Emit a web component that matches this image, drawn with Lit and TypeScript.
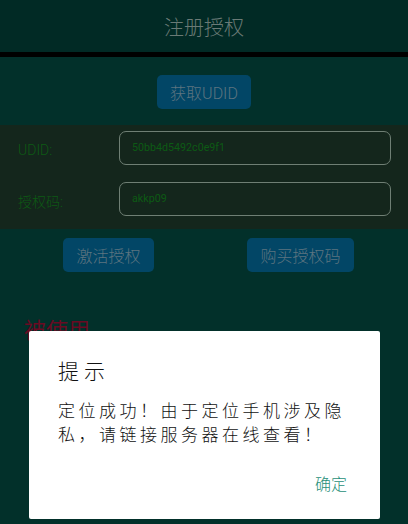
import { LitElement, html, css } from "lit";
import { customElement } from "lit/decorators.js";

@customElement("app-root")
export class AppRoot extends LitElement {
  static styles = css`
    :host {
      display: block;
      position: relative;
      width: 408px;
      height: 524px;
      overflow: hidden;
      background: #02302a;
      font-family: Roboto, "Noto Sans CJK SC", sans-serif;
    }
    .header {
      height: 52px;
      box-sizing: border-box;
      background: #012a25;
      display: flex;
      align-items: center;
      justify-content: center;
      color: #6a7a76;
      font-size: 20px;
      font-weight: 300;
    }
    .rule {
      height: 5px;
      background: #000;
    }
    .top {
      height: 68px;
      display: flex;
      align-items: flex-start;
      justify-content: center;
      padding-top: 18px;
      box-sizing: border-box;
    }
    .btn {
      height: 34px;
      box-sizing: border-box;
      border-radius: 5px;
      background: #024666;
      color: #5d7480;
      font-size: 16px;
      font-weight: 300;
      display: flex;
      align-items: center;
      justify-content: center;
    }
    .udid {
      width: 94px;
    }
    .panel {
      height: 104px;
      box-sizing: border-box;
      background: #14261c;
      padding: 6px 17px 0 18px;
      display: flex;
      flex-direction: column;
      gap: 17px;
    }
    .row {
      display: flex;
      align-items: center;
      height: 34px;
    }
    .label {
      width: 101px;
      color: #0d5a14;
      font-size: 14px;
      font-weight: 300;
      padding-top: 3px;
    }
    .field {
      flex: 1;
      height: 34px;
      box-sizing: border-box;
      border: 1px solid #6f7f74;
      border-radius: 7px;
      display: flex;
      align-items: center;
      padding: 0 0 2px 12px;
      color: #0d5a14;
      font-size: 10.7px;
    }
    .actions {
      display: flex;
      justify-content: space-between;
      padding: 9px 54px 0 63px;
    }
    .activate {
      width: 91px;
    }
    .buy {
      width: 107px;
    }
    .used {
      margin: 46px 0 0 24px;
      color: #6a0a22;
      font-size: 22px;
      line-height: 26px;
    }
    .dialog {
      position: absolute;
      left: 29px;
      top: 331px;
      width: 351px;
      height: 188px;
      box-sizing: border-box;
      background: #fff;
      border-radius: 2px;
      padding: 25px 30px 0 29px;
      font-family: "Noto Sans CJK SC", sans-serif;
      font-weight: 300;
      color: #111;
      display: flex;
      flex-direction: column;
    }
    .title {
      font-size: 21px;
      letter-spacing: 5px;
      line-height: 28px;
    }
    .message {
      margin-top: 14px;
      font-size: 17px;
      letter-spacing: 3.5px;
      line-height: 24px;
    }
    .ok {
      margin-top: 25px;
      margin-right: 3px;
      align-self: flex-end;
      color: #1f8f78;
      font-size: 16px;
    }
  `;

  render() {
    return html`
      <div class="header">注册授权</div>
      <div class="rule"></div>
      <div class="top"><div class="btn udid">获取UDID</div></div>
      <div class="panel">
        <div class="row">
          <div class="label">UDID:</div>
          <div class="field">50bb4d5492c0e9f1</div>
        </div>
        <div class="row">
          <div class="label">授权码:</div>
          <div class="field">akkp09</div>
        </div>
      </div>
      <div class="actions">
        <div class="btn activate">激活授权</div>
        <div class="btn buy">购买授权码</div>
      </div>
      <div class="used">被使用</div>
      <div class="dialog">
        <div class="title">提示</div>
        <div class="message">定位成功！由于定位手机涉及隐私，请链接服务器在线查看！</div>
        <div class="ok">确定</div>
      </div>
    `;
  }
}
